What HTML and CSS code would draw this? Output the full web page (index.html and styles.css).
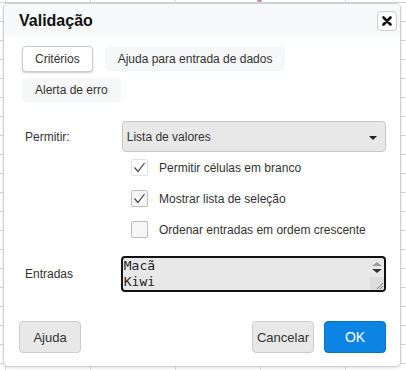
FILE: index.html
```html
<!DOCTYPE html>
<html lang="pt">
<head>
    <meta charset="UTF-8">
    <meta name="viewport" content="width=device-width, initial-scale=1.0">
    <title>Validação</title>
    <link rel="stylesheet" href="styles.css">
</head>
<body>
    <div class="sheet">
        <span class="cursor"></span>
        <div class="dialog">
            <div class="dialog-head">
                <h3 class="title">Validação</h3>
                <button class="close">
                    <svg width="10" height="10" viewBox="0 0 10 10">
                        <path d="M1.5 1.5 L8.5 8.5 M8.5 1.5 L1.5 8.5" stroke="#111" stroke-width="2.6" stroke-linecap="round"/>
                    </svg>
                </button>
            </div>

            <div class="dialog-body">
                <div class="tabs">
                    <button class="tab active">Critérios</button>
                    <button class="tab">Ajuda para entrada de dados</button>
                    <button class="tab">Alerta de erro</button>
                </div>

                <div class="row">
                    <label class="label">Permitir:</label>
                    <div class="select">
                        <span>Lista de valores</span>
                        <span class="caret"></span>
                    </div>
                </div>

                <div class="checks">
                    <label class="check">
                        <span class="box first">
                            <svg width="15" height="15" viewBox="0 0 15 15"><path d="M2.5 7.5 L6 11.5 L12.5 3" fill="none" stroke="#444" stroke-width="1.2"/></svg>
                        </span>
                        Permitir células em branco
                    </label>
                    <label class="check">
                        <span class="box">
                            <svg width="15" height="15" viewBox="0 0 15 15"><path d="M2.5 7.5 L6 11.5 L12.5 3" fill="none" stroke="#444" stroke-width="1.2"/></svg>
                        </span>
                        Mostrar lista de seleção
                    </label>
                    <label class="check">
                        <span class="box"></span>
                        Ordenar entradas em ordem crescente
                    </label>
                </div>

                <div class="row entries">
                    <label class="label">Entradas</label>
                    <div class="values">
                        <textarea class="values-text" spellcheck="false">Macã
Kiwi
Banana
Laranja</textarea>
                        <div class="scroll">
                            <span class="arrow up"></span>
                            <span class="arrow down"></span>
                            <span class="grip">
                                <svg width="8" height="8" viewBox="0 0 8 8"><path d="M7 1 L1 7 M7 4 L4 7" stroke="#777" stroke-width="1"/></svg>
                            </span>
                        </div>
                    </div>
                </div>
            </div>

            <div class="dialog-foot">
                <button class="btn">Ajuda</button>
                <div class="right">
                    <button class="btn">Cancelar</button>
                    <button class="btn primary">OK</button>
                </div>
            </div>
        </div>
    </div>
</body>
</html>
```

FILE: styles.css
```css
html, body {
    margin: 0;
    padding: 0;
}

body {
    width: 406px;
    height: 370px;
    overflow: hidden;
    font-family: "Liberation Sans", Arial, sans-serif;
    font-size: 12px;
    color: #333;
    background-color: #fff;
}

.sheet {
    position: relative;
    height: 370px;
    padding-top: 3px;
    box-sizing: border-box;
    background-image:
        linear-gradient(to bottom, #d4d4d4 1px, transparent 1px),
        linear-gradient(to right, #dcdcdc 1px, transparent 1px);
    background-size: 100% 19px, 85px 100%;
    background-position: 0 2px, 5px 0;
}

.cursor {
    position: absolute;
    left: 257px;
    top: 0;
    width: 5px;
    height: 2px;
    border-radius: 0 0 3px 3px;
    background: #c48aa8;
}

.dialog {
    margin: 0 5px 0 3px;
    height: 364px;
    box-sizing: border-box;
    border: 1px solid #cfcfcf;
    border-radius: 5px;
    background: #fff;
    box-shadow: 0 1px 3px rgba(0, 0, 0, 0.12);
    display: flex;
    flex-direction: column;
    overflow: hidden;
}

.dialog-head {
    height: 33px;
    background: #f8f9fa;
    display: flex;
    align-items: center;
    justify-content: space-between;
    padding: 0 3px 0 15px;
}

.title {
    margin: 0;
    font-size: 16px;
    font-weight: bold;
    color: #111;
}

.close {
    width: 20px;
    height: 20px;
    padding: 0;
    border: 1px solid #cdcdcd;
    border-radius: 4px;
    background: #fff;
    display: flex;
    align-items: center;
    justify-content: center;
}

.dialog-body {
    padding: 10px 14px 0 18px;
}

.tabs {
    display: flex;
    flex-wrap: wrap;
    gap: 6px 12px;
    width: 280px;
}

.tab {
    height: 24px;
    padding: 0 12px;
    border: 1px solid transparent;
    border-radius: 4px;
    background: #f6f7f8;
    font-family: inherit;
    font-size: 12px;
    color: #333;
}

.tab.active {
    height: 26px;
    padding: 0 12px;
    background: #fff;
    border-color: #ccc;
    box-shadow: 0 1px 2px rgba(0, 0, 0, 0.2);
    margin-top: -1px;
}

.row {
    display: flex;
    align-items: center;
}

.label {
    width: 100px;
    padding-left: 3px;
    box-sizing: border-box;
}

.tabs + .row {
    margin-top: 19px;
}

.select {
    width: 265px;
    height: 31px;
    box-sizing: border-box;
    border: 1px solid #c8c8c8;
    border-radius: 4px;
    background: #e8e8e8;
    display: flex;
    align-items: center;
    justify-content: space-between;
    padding: 0 8px 0 4px;
}

.caret {
    width: 0;
    height: 0;
    border-left: 4px solid transparent;
    border-right: 4px solid transparent;
    border-top: 4px solid #222;
    margin-top: 3px;
}

.checks {
    padding-left: 109px;
    padding-top: 7px;
    display: flex;
    flex-direction: column;
    gap: 14px;
}

.check {
    display: flex;
    align-items: center;
    gap: 11px;
    height: 17px;
}

.box {
    width: 17px;
    height: 17px;
    box-sizing: border-box;
    border: 1px solid #bdbdbd;
    border-radius: 2px;
    background: #f6f6f6;
    display: flex;
    align-items: center;
    justify-content: center;
}

.box.first {
    border-color: #e2e2e2;
    background: #fff;
}

.entries {
    margin-top: 18px;
}

.values {
    width: 266px;
    height: 36px;
    box-sizing: border-box;
    border: 2px solid #111;
    border-radius: 4px;
    background: #e8e8e8;
    margin-left: -1px;
    display: flex;
    overflow: hidden;
}

.values-text {
    flex: 1;
    border: none;
    background: transparent;
    font-family: "DejaVu Sans Mono", monospace;
    font-size: 13px;
    line-height: 16px;
    color: #222;
    padding: 0 1px;
    margin: 0;
    resize: none;
    overflow: hidden;
    outline: none;
}

.scroll {
    width: 14px;
    display: flex;
    flex-direction: column;
    align-items: center;
    padding-top: 4px;
    gap: 3px;
}

.arrow {
    width: 0;
    height: 0;
    border-left: 5px solid transparent;
    border-right: 5px solid transparent;
}

.arrow.up {
    border-bottom: 4px solid #9a9a9a;
}

.arrow.down {
    border-top: 4px solid #333;
}

.grip {
    margin-top: auto;
    width: 14px;
    height: 13px;
    background: #dcdcdc;
    display: flex;
    align-items: flex-end;
    justify-content: flex-end;
}

.dialog-foot {
    margin-top: auto;
    padding: 0 14px 13px 15px;
    display: flex;
    justify-content: space-between;
}

.right {
    display: flex;
    gap: 10px;
}

.btn {
    width: 62px;
    height: 32px;
    border: 1px solid #cccccc;
    border-radius: 4px;
    background: #e8e8e8;
    font-family: inherit;
    font-size: 13px;
    color: #333;
    padding: 0;
}

.btn.primary {
    background: #0b84e3;
    border-color: #0a73c8;
    color: #fff;
    font-size: 14px;
}
```
